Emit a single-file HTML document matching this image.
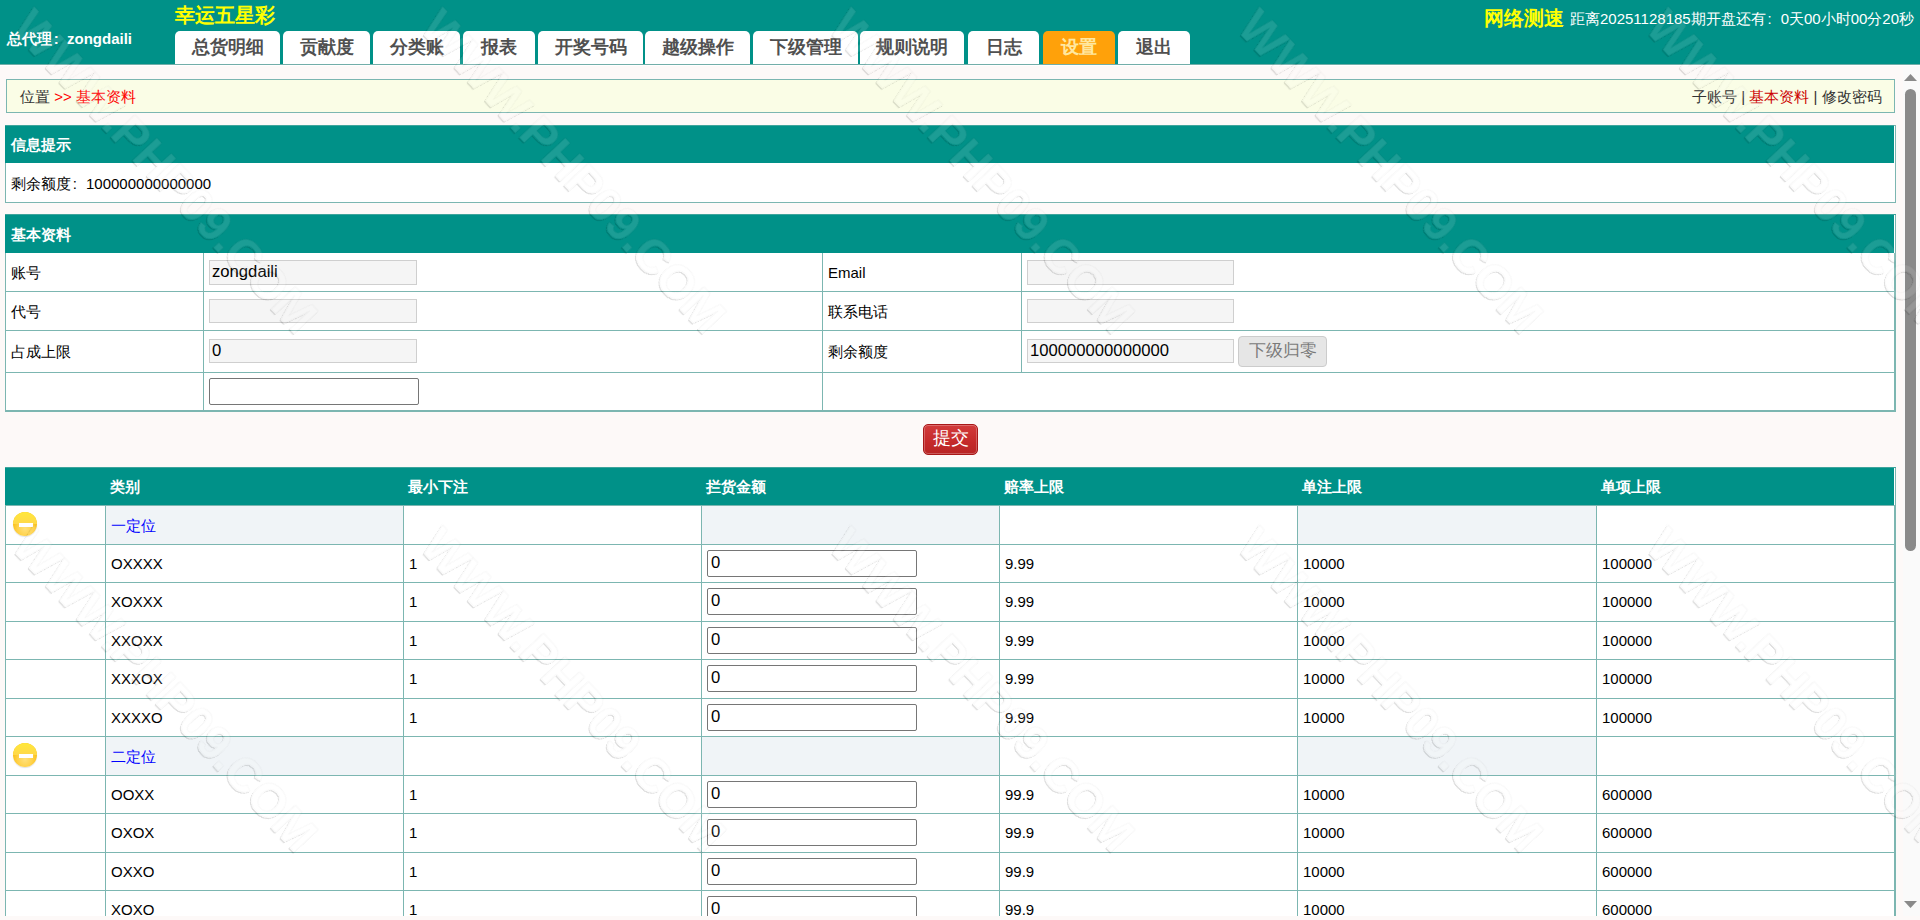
<!DOCTYPE html><html><head><meta charset="utf-8"><style>
html,body{margin:0;padding:0;width:1920px;height:920px;overflow:hidden;background:#fdf9f8;font-family:"Liberation Sans",sans-serif}
.t{position:absolute;white-space:nowrap}
.b{position:absolute;box-sizing:border-box}
.c{display:inline-block;width:1em;padding-left:0.12em;box-sizing:border-box}
</style></head><body>
<div class="b" style="left:0px;top:0px;width:1920px;height:64px;background:#009188"></div>
<div class="b" style="left:0px;top:64px;width:1920px;height:1px;background:#72aea9"></div>
<div class="b" style="left:0px;top:65px;width:1920px;height:1px;background:#fff"></div>
<div class="t" style="left:175px;top:5px;font-size:20px;line-height:20px;color:#ffff00;font-weight:bold;">幸运五星彩</div>
<div class="t" style="left:7px;top:31px;font-size:15px;line-height:15px;color:#fff;font-weight:bold;">总代理<span class="c">:</span>zongdaili</div>
<div class="b" style="left:175px;top:31px;width:105px;height:33px;background:#fff;border-radius:5px 5px 0 0;text-align:center;font-size:18px;line-height:18px;padding-top:7px;font-weight:bold;color:#505050">总货明细</div>
<div class="b" style="left:283px;top:31px;width:87px;height:33px;background:#fff;border-radius:5px 5px 0 0;text-align:center;font-size:18px;line-height:18px;padding-top:7px;font-weight:bold;color:#505050">贡献度</div>
<div class="b" style="left:373px;top:31px;width:87px;height:33px;background:#fff;border-radius:5px 5px 0 0;text-align:center;font-size:18px;line-height:18px;padding-top:7px;font-weight:bold;color:#505050">分类账</div>
<div class="b" style="left:463px;top:31px;width:72px;height:33px;background:#fff;border-radius:5px 5px 0 0;text-align:center;font-size:18px;line-height:18px;padding-top:7px;font-weight:bold;color:#505050">报表</div>
<div class="b" style="left:538px;top:31px;width:105px;height:33px;background:#fff;border-radius:5px 5px 0 0;text-align:center;font-size:18px;line-height:18px;padding-top:7px;font-weight:bold;color:#505050">开奖号码</div>
<div class="b" style="left:645px;top:31px;width:105px;height:33px;background:#fff;border-radius:5px 5px 0 0;text-align:center;font-size:18px;line-height:18px;padding-top:7px;font-weight:bold;color:#505050">越级操作</div>
<div class="b" style="left:753px;top:31px;width:105px;height:33px;background:#fff;border-radius:5px 5px 0 0;text-align:center;font-size:18px;line-height:18px;padding-top:7px;font-weight:bold;color:#505050">下级管理</div>
<div class="b" style="left:860px;top:31px;width:104px;height:33px;background:#fff;border-radius:5px 5px 0 0;text-align:center;font-size:18px;line-height:18px;padding-top:7px;font-weight:bold;color:#505050">规则说明</div>
<div class="b" style="left:968px;top:31px;width:71px;height:33px;background:#fff;border-radius:5px 5px 0 0;text-align:center;font-size:18px;line-height:18px;padding-top:7px;font-weight:bold;color:#505050">日志</div>
<div class="b" style="left:1043px;top:31px;width:72px;height:33px;background:#ffa10a;border-radius:5px 5px 0 0;text-align:center;font-size:18px;line-height:18px;padding-top:7px;font-weight:bold;color:#ffe8a0">设置</div>
<div class="b" style="left:1118px;top:31px;width:72px;height:33px;background:#fff;border-radius:5px 5px 0 0;text-align:center;font-size:18px;line-height:18px;padding-top:7px;font-weight:bold;color:#505050">退出</div>
<div class="t" style="left:1484px;top:8px;font-size:20px;line-height:20px;color:#ffff00;font-weight:bold;">网络测速</div>
<div class="t" style="left:1570px;top:11px;font-size:15px;line-height:15px;color:#fff;">距离20251128185期开盘还有<span class="c">:</span>0天00小时00分20秒</div>
<div class="b" style="left:6px;top:79px;width:1889px;height:34px;background:#fafde6;border:1px solid #7cb6b1"></div>
<div class="t" style="left:20px;top:89px;font-size:15px;line-height:15px;color:#000;"><span style="color:#333">位置</span> <span style="color:#f00">&gt;&gt; 基本资料</span></div>
<div class="t" style="left:1692px;top:89px;font-size:15px;line-height:15px;color:#000;"><span style="color:#333">子账号</span> <span style="color:#333">|</span> <span style="color:#c00">基本资料</span> <span style="color:#333">|</span> <span style="color:#333">修改密码</span></div>
<div class="b" style="left:5px;top:125px;width:1891px;height:78px;background:#fff;border:1px solid #7cb6b1"></div>
<div class="b" style="left:6px;top:126px;width:1888px;height:37px;background:#009188"></div>
<div class="b" style="left:5px;top:125px;width:1px;height:38px;background:#009188"></div>
<div class="b" style="left:5px;top:125px;width:1889px;height:1px;background:#3fa49c"></div>
<div class="t" style="left:11px;top:137px;font-size:15px;line-height:15px;color:#fff;font-weight:bold;">信息提示</div>
<div class="t" style="left:11px;top:176px;font-size:15px;line-height:15px;color:#000;">剩余额度<span class="c">:</span>100000000000000</div>
<div class="b" style="left:5px;top:214px;width:1891px;height:198px;background:#fff;border:1px solid #7cb6b1;border-right-width:2px"></div>
<div class="b" style="left:5px;top:214px;width:1889px;height:39px;background:#009188"></div>
<div class="b" style="left:1894px;top:214px;width:1px;height:39px;background:#fff"></div>
<div class="b" style="left:5px;top:214px;width:1891px;height:1px;background:#3fa49c"></div>
<div class="t" style="left:11px;top:227px;font-size:15px;line-height:15px;color:#fff;font-weight:bold;">基本资料</div>
<div class="b" style="left:5px;top:291px;width:1890px;height:1px;background:#7cb6b1"></div>
<div class="b" style="left:5px;top:330px;width:1890px;height:1px;background:#7cb6b1"></div>
<div class="b" style="left:5px;top:372px;width:1890px;height:1px;background:#7cb6b1"></div>
<div class="b" style="left:5px;top:411px;width:1890px;height:1px;background:#7cb6b1"></div>
<div class="b" style="left:5px;top:410px;width:1891px;height:2px;background:#7cb6b1"></div>
<div class="b" style="left:203px;top:253px;width:1px;height:158px;background:#7cb6b1"></div>
<div class="b" style="left:822px;top:253px;width:1px;height:158px;background:#7cb6b1"></div>
<div class="b" style="left:1021px;top:253px;width:1px;height:119px;background:#7cb6b1"></div>
<div class="t" style="left:11px;top:265px;font-size:15px;line-height:15px;color:#000;">账号</div>
<div class="t" style="left:11px;top:304px;font-size:15px;line-height:15px;color:#000;">代号</div>
<div class="t" style="left:11px;top:344px;font-size:15px;line-height:15px;color:#000;">占成上限</div>
<div class="t" style="left:828px;top:265px;font-size:15px;line-height:15px;color:#000;">Email</div>
<div class="t" style="left:828px;top:304px;font-size:15px;line-height:15px;color:#000;">联系电话</div>
<div class="t" style="left:828px;top:344px;font-size:15px;line-height:15px;color:#000;">剩余额度</div>
<div class="b" style="left:209px;top:260px;width:208px;height:25px;background:#f5f5f5;border:1px solid #cfcfcf;font-size:16.67px;line-height:16px;padding:3px 0 0 2px;color:#000">zongdaili</div>
<div class="b" style="left:209px;top:299px;width:208px;height:24px;background:#f5f5f5;border:1px solid #cfcfcf;font-size:16.67px;line-height:16px;padding:3px 0 0 2px;color:#000"></div>
<div class="b" style="left:209px;top:339px;width:208px;height:24px;background:#f5f5f5;border:1px solid #cfcfcf;font-size:16.67px;line-height:16px;padding:3px 0 0 2px;color:#000">0</div>
<div class="b" style="left:1027px;top:260px;width:207px;height:25px;background:#f5f5f5;border:1px solid #cfcfcf;font-size:16.67px;line-height:16px;padding:3px 0 0 2px;color:#000"></div>
<div class="b" style="left:1027px;top:299px;width:207px;height:24px;background:#f5f5f5;border:1px solid #cfcfcf;font-size:16.67px;line-height:16px;padding:3px 0 0 2px;color:#000"></div>
<div class="b" style="left:1027px;top:339px;width:207px;height:24px;background:#f5f5f5;border:1px solid #cfcfcf;font-size:16.67px;line-height:16px;padding:3px 0 0 2px;color:#000">100000000000000</div>
<div class="b" style="left:209px;top:378px;width:210px;height:27px;background:#fff;border:1px solid #767676;border-radius:2px"></div>
<div class="b" style="left:1238px;top:336px;width:89px;height:31px;background:#e6e6e6;border:1px solid #cccccc;border-radius:4px;text-align:center;font-size:17px;line-height:17px;padding-top:5px;color:#7a7a7a">下级归零</div>
<div class="b" style="left:923px;top:424px;width:55px;height:31px;background:linear-gradient(#d23b3b,#c42a2a 60%,#b82525);border:1px solid #a81818;border-radius:5px;box-shadow:inset 0 0 0 1px rgba(255,255,255,0.25);text-align:center;font-size:18px;line-height:18px;padding-top:4px;color:#fff">提交</div>
<div class="b" style="left:5px;top:467px;width:1891px;height:453px;background:#fff;border-left:1px solid #7cb6b1;border-right:2px solid #7cb6b1"></div>
<div class="b" style="left:5px;top:467px;width:1889px;height:38px;background:#009188"></div>
<div class="b" style="left:1894px;top:467px;width:1px;height:38px;background:#fff"></div>
<div class="b" style="left:5px;top:467px;width:1891px;height:1px;background:#3fa49c"></div>
<div class="t" style="left:110px;top:479px;font-size:15px;line-height:15px;color:#fff;font-weight:bold;">类别</div>
<div class="t" style="left:408px;top:479px;font-size:15px;line-height:15px;color:#fff;font-weight:bold;">最小下注</div>
<div class="t" style="left:706px;top:479px;font-size:15px;line-height:15px;color:#fff;font-weight:bold;">拦货金额</div>
<div class="t" style="left:1004px;top:479px;font-size:15px;line-height:15px;color:#fff;font-weight:bold;">赔率上限</div>
<div class="t" style="left:1302px;top:479px;font-size:15px;line-height:15px;color:#fff;font-weight:bold;">单注上限</div>
<div class="t" style="left:1601px;top:479px;font-size:15px;line-height:15px;color:#fff;font-weight:bold;">单项上限</div>
<div class="b" style="left:106px;top:506px;width:297px;height:38px;background:#f0f4f7"></div>
<div class="b" style="left:702px;top:506px;width:297px;height:38px;background:#f0f4f7"></div>
<div class="b" style="left:1298px;top:506px;width:298px;height:38px;background:#f0f4f7"></div>
<div class="t" style="left:111px;top:518px;font-size:15px;line-height:15px;color:#0000ff;">一定位</div>
<div class="b" style="left:13px;top:512px;width:24px;height:24px;border-radius:50%;background:radial-gradient(circle at 50% 70%,#ffe07a 0,#ffd24a 35%,#f7b800 75%,#f0a800 100%);box-shadow:0 1px 1px rgba(0,0,0,0.12)"></div>
<div class="b" style="left:13px;top:512px;width:24px;height:12px;border-radius:12px 12px 0 0;background:linear-gradient(#ffe83a,#ffd84a)"></div>
<div class="b" style="left:18.5px;top:522.5px;width:14px;height:4px;background:#fff"></div>
<div class="t" style="left:111px;top:556px;font-size:15px;line-height:15px;color:#000;">OXXXX</div>
<div class="t" style="left:409px;top:556px;font-size:15px;line-height:15px;color:#000;">1</div>
<div class="b" style="left:707px;top:550px;width:210px;height:27px;background:#fff;border:1px solid #767676;border-radius:2px;font-size:16.67px;line-height:16px;padding:4px 0 0 3px">0</div>
<div class="t" style="left:1005px;top:556px;font-size:15px;line-height:15px;color:#000;">9.99</div>
<div class="t" style="left:1303px;top:556px;font-size:15px;line-height:15px;color:#000;">10000</div>
<div class="t" style="left:1602px;top:556px;font-size:15px;line-height:15px;color:#000;">100000</div>
<div class="t" style="left:111px;top:594px;font-size:15px;line-height:15px;color:#000;">XOXXX</div>
<div class="t" style="left:409px;top:594px;font-size:15px;line-height:15px;color:#000;">1</div>
<div class="b" style="left:707px;top:588px;width:210px;height:27px;background:#fff;border:1px solid #767676;border-radius:2px;font-size:16.67px;line-height:16px;padding:4px 0 0 3px">0</div>
<div class="t" style="left:1005px;top:594px;font-size:15px;line-height:15px;color:#000;">9.99</div>
<div class="t" style="left:1303px;top:594px;font-size:15px;line-height:15px;color:#000;">10000</div>
<div class="t" style="left:1602px;top:594px;font-size:15px;line-height:15px;color:#000;">100000</div>
<div class="t" style="left:111px;top:633px;font-size:15px;line-height:15px;color:#000;">XXOXX</div>
<div class="t" style="left:409px;top:633px;font-size:15px;line-height:15px;color:#000;">1</div>
<div class="b" style="left:707px;top:627px;width:210px;height:27px;background:#fff;border:1px solid #767676;border-radius:2px;font-size:16.67px;line-height:16px;padding:4px 0 0 3px">0</div>
<div class="t" style="left:1005px;top:633px;font-size:15px;line-height:15px;color:#000;">9.99</div>
<div class="t" style="left:1303px;top:633px;font-size:15px;line-height:15px;color:#000;">10000</div>
<div class="t" style="left:1602px;top:633px;font-size:15px;line-height:15px;color:#000;">100000</div>
<div class="t" style="left:111px;top:671px;font-size:15px;line-height:15px;color:#000;">XXXOX</div>
<div class="t" style="left:409px;top:671px;font-size:15px;line-height:15px;color:#000;">1</div>
<div class="b" style="left:707px;top:665px;width:210px;height:27px;background:#fff;border:1px solid #767676;border-radius:2px;font-size:16.67px;line-height:16px;padding:4px 0 0 3px">0</div>
<div class="t" style="left:1005px;top:671px;font-size:15px;line-height:15px;color:#000;">9.99</div>
<div class="t" style="left:1303px;top:671px;font-size:15px;line-height:15px;color:#000;">10000</div>
<div class="t" style="left:1602px;top:671px;font-size:15px;line-height:15px;color:#000;">100000</div>
<div class="t" style="left:111px;top:710px;font-size:15px;line-height:15px;color:#000;">XXXXO</div>
<div class="t" style="left:409px;top:710px;font-size:15px;line-height:15px;color:#000;">1</div>
<div class="b" style="left:707px;top:704px;width:210px;height:27px;background:#fff;border:1px solid #767676;border-radius:2px;font-size:16.67px;line-height:16px;padding:4px 0 0 3px">0</div>
<div class="t" style="left:1005px;top:710px;font-size:15px;line-height:15px;color:#000;">9.99</div>
<div class="t" style="left:1303px;top:710px;font-size:15px;line-height:15px;color:#000;">10000</div>
<div class="t" style="left:1602px;top:710px;font-size:15px;line-height:15px;color:#000;">100000</div>
<div class="b" style="left:106px;top:737px;width:297px;height:38px;background:#f0f4f7"></div>
<div class="b" style="left:702px;top:737px;width:297px;height:38px;background:#f0f4f7"></div>
<div class="b" style="left:1298px;top:737px;width:298px;height:38px;background:#f0f4f7"></div>
<div class="t" style="left:111px;top:749px;font-size:15px;line-height:15px;color:#0000ff;">二定位</div>
<div class="b" style="left:13px;top:743px;width:24px;height:24px;border-radius:50%;background:radial-gradient(circle at 50% 70%,#ffe07a 0,#ffd24a 35%,#f7b800 75%,#f0a800 100%);box-shadow:0 1px 1px rgba(0,0,0,0.12)"></div>
<div class="b" style="left:13px;top:743px;width:24px;height:12px;border-radius:12px 12px 0 0;background:linear-gradient(#ffe83a,#ffd84a)"></div>
<div class="b" style="left:18.5px;top:753.5px;width:14px;height:4px;background:#fff"></div>
<div class="t" style="left:111px;top:787px;font-size:15px;line-height:15px;color:#000;">OOXX</div>
<div class="t" style="left:409px;top:787px;font-size:15px;line-height:15px;color:#000;">1</div>
<div class="b" style="left:707px;top:781px;width:210px;height:27px;background:#fff;border:1px solid #767676;border-radius:2px;font-size:16.67px;line-height:16px;padding:4px 0 0 3px">0</div>
<div class="t" style="left:1005px;top:787px;font-size:15px;line-height:15px;color:#000;">99.9</div>
<div class="t" style="left:1303px;top:787px;font-size:15px;line-height:15px;color:#000;">10000</div>
<div class="t" style="left:1602px;top:787px;font-size:15px;line-height:15px;color:#000;">600000</div>
<div class="t" style="left:111px;top:825px;font-size:15px;line-height:15px;color:#000;">OXOX</div>
<div class="t" style="left:409px;top:825px;font-size:15px;line-height:15px;color:#000;">1</div>
<div class="b" style="left:707px;top:819px;width:210px;height:27px;background:#fff;border:1px solid #767676;border-radius:2px;font-size:16.67px;line-height:16px;padding:4px 0 0 3px">0</div>
<div class="t" style="left:1005px;top:825px;font-size:15px;line-height:15px;color:#000;">99.9</div>
<div class="t" style="left:1303px;top:825px;font-size:15px;line-height:15px;color:#000;">10000</div>
<div class="t" style="left:1602px;top:825px;font-size:15px;line-height:15px;color:#000;">600000</div>
<div class="t" style="left:111px;top:864px;font-size:15px;line-height:15px;color:#000;">OXXO</div>
<div class="t" style="left:409px;top:864px;font-size:15px;line-height:15px;color:#000;">1</div>
<div class="b" style="left:707px;top:858px;width:210px;height:27px;background:#fff;border:1px solid #767676;border-radius:2px;font-size:16.67px;line-height:16px;padding:4px 0 0 3px">0</div>
<div class="t" style="left:1005px;top:864px;font-size:15px;line-height:15px;color:#000;">99.9</div>
<div class="t" style="left:1303px;top:864px;font-size:15px;line-height:15px;color:#000;">10000</div>
<div class="t" style="left:1602px;top:864px;font-size:15px;line-height:15px;color:#000;">600000</div>
<div class="t" style="left:111px;top:902px;font-size:15px;line-height:15px;color:#000;">XOXO</div>
<div class="t" style="left:409px;top:902px;font-size:15px;line-height:15px;color:#000;">1</div>
<div class="b" style="left:707px;top:896px;width:210px;height:27px;background:#fff;border:1px solid #767676;border-radius:2px;font-size:16.67px;line-height:16px;padding:4px 0 0 3px">0</div>
<div class="t" style="left:1005px;top:902px;font-size:15px;line-height:15px;color:#000;">99.9</div>
<div class="t" style="left:1303px;top:902px;font-size:15px;line-height:15px;color:#000;">10000</div>
<div class="t" style="left:1602px;top:902px;font-size:15px;line-height:15px;color:#000;">600000</div>
<div class="b" style="left:5px;top:505px;width:1890px;height:1px;background:#7cb6b1"></div>
<div class="b" style="left:5px;top:544px;width:1890px;height:1px;background:#7cb6b1"></div>
<div class="b" style="left:5px;top:582px;width:1890px;height:1px;background:#7cb6b1"></div>
<div class="b" style="left:5px;top:621px;width:1890px;height:1px;background:#7cb6b1"></div>
<div class="b" style="left:5px;top:659px;width:1890px;height:1px;background:#7cb6b1"></div>
<div class="b" style="left:5px;top:698px;width:1890px;height:1px;background:#7cb6b1"></div>
<div class="b" style="left:5px;top:736px;width:1890px;height:1px;background:#7cb6b1"></div>
<div class="b" style="left:5px;top:775px;width:1890px;height:1px;background:#7cb6b1"></div>
<div class="b" style="left:5px;top:813px;width:1890px;height:1px;background:#7cb6b1"></div>
<div class="b" style="left:5px;top:852px;width:1890px;height:1px;background:#7cb6b1"></div>
<div class="b" style="left:5px;top:890px;width:1890px;height:1px;background:#7cb6b1"></div>
<div class="b" style="left:5px;top:929px;width:1890px;height:1px;background:#7cb6b1"></div>
<div class="b" style="left:105px;top:505px;width:1px;height:415px;background:#7cb6b1"></div>
<div class="b" style="left:403px;top:505px;width:1px;height:415px;background:#7cb6b1"></div>
<div class="b" style="left:701px;top:505px;width:1px;height:415px;background:#7cb6b1"></div>
<div class="b" style="left:999px;top:505px;width:1px;height:415px;background:#7cb6b1"></div>
<div class="b" style="left:1297px;top:505px;width:1px;height:415px;background:#7cb6b1"></div>
<div class="b" style="left:1596px;top:505px;width:1px;height:415px;background:#7cb6b1"></div>
<div class="b" style="left:0px;top:916px;width:1920px;height:4px;background:#fdf9f8"></div>
<div class="b" style="left:1903px;top:66px;width:17px;height:850px;background:#fafafa"></div>
<svg style="position:absolute;left:1903px;top:66px" width="17" height="850"><polygon points="1,15 7.5,8 14,15" fill="#8a8a8a"/><polygon points="1,835 14,835 7.5,842" fill="#8a8a8a"/></svg>
<div class="b" style="left:1905px;top:89px;width:11px;height:462px;background:#8a8a8a;border-radius:5.5px"></div>
<svg style="position:absolute;left:0;top:0;pointer-events:none" width="1920" height="920"><defs><filter id="wm" x="-10%" y="-10%" width="120%" height="120%"><feColorMatrix in="SourceAlpha" type="matrix" values="0 0 0 0 0  0 0 0 0 0  0 0 0 0 0  0 0 0 20 0" result="a"/><feOffset in="a" dx="-1" dy="1" result="off"/><feComposite in="off" in2="a" operator="out" result="edge"/><feFlood flood-color="#000" flood-opacity="0.12"/><feComposite in2="edge" operator="in" result="shadow"/><feMerge><feMergeNode in="shadow"/><feMergeNode in="SourceGraphic"/></feMerge></filter></defs><g filter="url(#wm)" font-family="Liberation Sans" font-weight="bold" font-size="47.5" fill="rgba(255,255,255,0.11)" stroke="rgba(0,0,0,0.035)" stroke-width="0.8"><text transform="translate(-398.5,29.0) rotate(47)" x="0" y="0">WWW.PHP09.COM</text><text transform="translate(10.0,29.0) rotate(47)" x="0" y="0">WWW.PHP09.COM</text><text transform="translate(418.5,29.0) rotate(47)" x="0" y="0">WWW.PHP09.COM</text><text transform="translate(827.0,29.0) rotate(47)" x="0" y="0">WWW.PHP09.COM</text><text transform="translate(1235.5,29.0) rotate(47)" x="0" y="0">WWW.PHP09.COM</text><text transform="translate(1644.0,29.0) rotate(47)" x="0" y="0">WWW.PHP09.COM</text><text transform="translate(-398.5,547.5) rotate(47)" x="0" y="0">WWW.PHP09.COM</text><text transform="translate(10.0,547.5) rotate(47)" x="0" y="0">WWW.PHP09.COM</text><text transform="translate(418.5,547.5) rotate(47)" x="0" y="0">WWW.PHP09.COM</text><text transform="translate(827.0,547.5) rotate(47)" x="0" y="0">WWW.PHP09.COM</text><text transform="translate(1235.5,547.5) rotate(47)" x="0" y="0">WWW.PHP09.COM</text><text transform="translate(1644.0,547.5) rotate(47)" x="0" y="0">WWW.PHP09.COM</text></g></svg>
</body></html>
